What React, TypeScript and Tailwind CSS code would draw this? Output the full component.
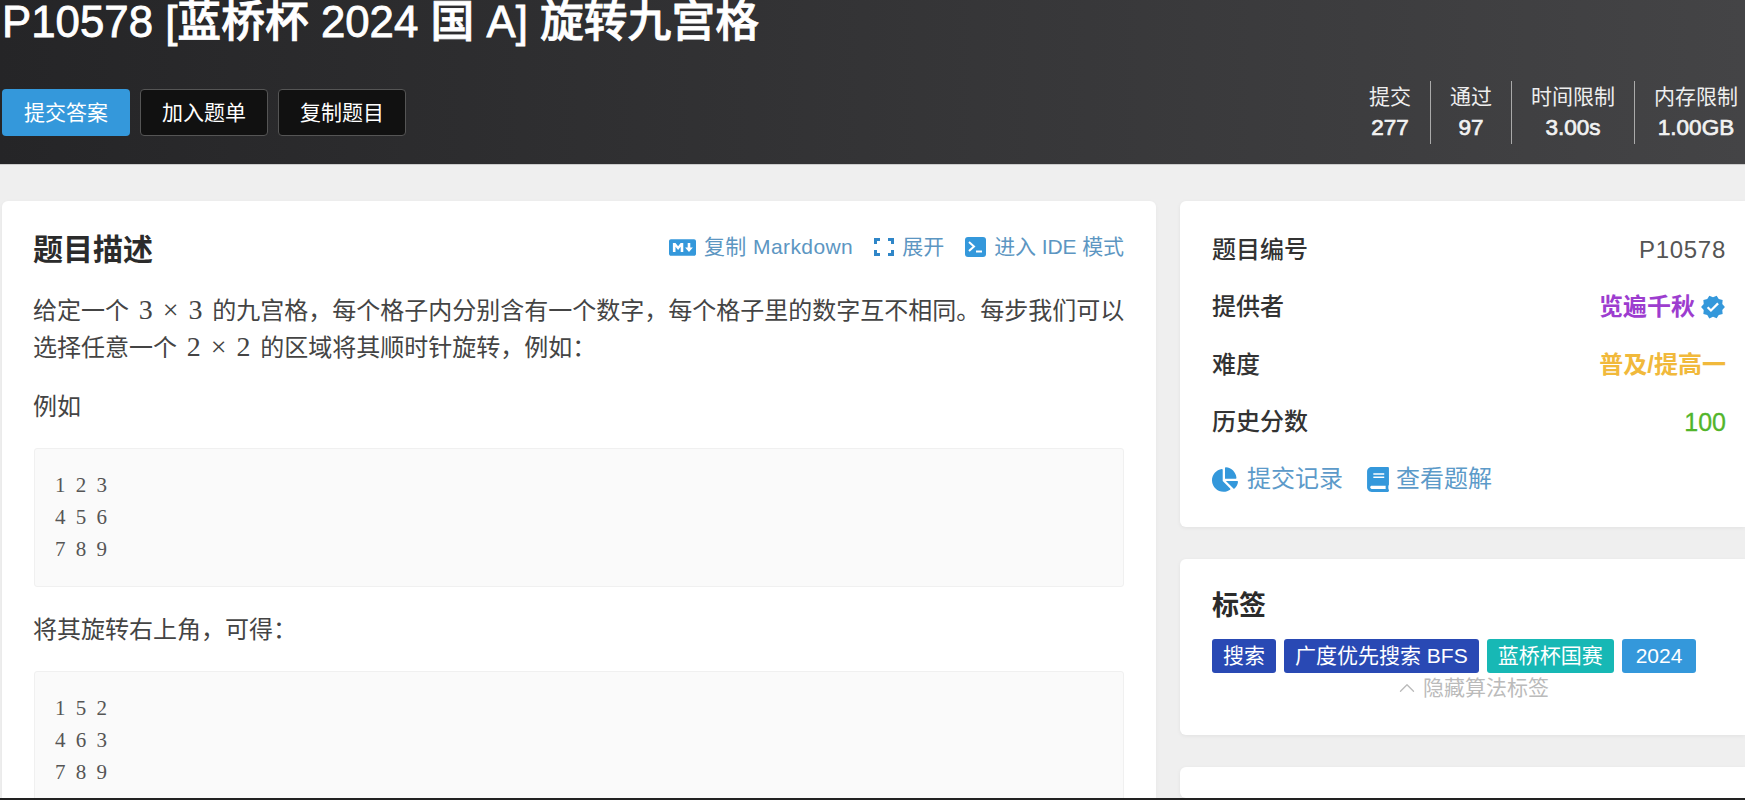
import React from "react";
import { FaMarkdown, FaChartPie, FaBook } from "react-icons/fa";
import { MdVerified } from "react-icons/md";
import { LuChevronUp } from "react-icons/lu";

function Expand() {
  return (
    <svg viewBox="0 0 22 20" className="h-[20px] w-[22px]" fill="none" stroke="#2f86c8" strokeWidth="3">
      <path d="M7 2.500H2.500V7M2.500 13v4.500H7M15 2.500h4.500V7M19.500 13v4.500H15" />
    </svg>
  );
}

function Term() {
  return (
    <svg viewBox="0 0 21 20" className="h-[20px] w-[21px]">
      <rect x="0" y="0" width="21" height="20" rx="3" fill="#3498db" />
      <path d="M4 5l5 4.500-5 4.500" fill="none" stroke="#fff" strokeWidth="2" />
      <path d="M11 14.500h6" fill="none" stroke="#fff" strokeWidth="2" />
    </svg>
  );
}

function Code({ rows }: { rows: string[] }) {
  return (
    <div className="mx-[32px] h-[139px] shrink-0 rounded-[3px] border border-[#f0f0f0] bg-[#fafafa] pl-[20px] pt-[21px] font-['Liberation_Serif',serif] text-[21px] leading-[31.800px] text-[#555] [word-spacing:5px]">
      {rows.map((r) => (
        <div key={r}>{r}</div>
      ))}
    </div>
  );
}

function Stat({ label, value, last }: { label: string; value: string; last?: boolean }) {
  return (
    <div className={`flex h-[63px] flex-col items-center px-[19px] ${last ? "" : "border-r border-[#aaa]"}`}>
      <div className="mt-[3px] text-[21px] leading-[26px] text-[#eee]">{label}</div>
      <div className="mt-[5px] text-[22.500px] leading-[26px] text-[#f2f2f2] [-webkit-text-stroke:0.7px_#f2f2f2]">{value}</div>
    </div>
  );
}

function Row({ label, children }: { label: string; children: React.ReactNode }) {
  return (
    <div className="flex h-[57.500px] items-center justify-between">
      <span className="text-[24px] font-medium text-[#333]">{label}</span>
      {children}
    </div>
  );
}

function Tag({ c, t }: { c: string; t: string }) {
  return (
    <span className={`flex h-[34px] items-center rounded-[3px] text-[21px] text-white ${c}`}>{t}</span>
  );
}

const M = "font-['Liberation_Serif',serif] text-[28px] [word-spacing:3px] mx-[3px]";

export default function App() {
  return (
    <div className="flex h-[800px] w-[1745px] flex-col overflow-hidden border-b-2 border-[#222] bg-[#efefef] font-['Liberation_Sans','Noto_Sans_CJK_SC',sans-serif]">
      <header className="flex h-[165px] shrink-0 flex-col border-b border-[#ccc] bg-gradient-to-r from-[#252527] to-[#444446] text-white">
        <h1 className="h-[44px] whitespace-nowrap pl-[2px] text-[43.800px] font-medium leading-[44px] [-webkit-text-stroke:0.8px_white]">
          P10578 [蓝桥杯 2024 国 A] 旋转九宫格
        </h1>
        <div className="mt-auto flex items-end justify-between pb-[20px] pl-[2px] pr-0">
          <div className="flex gap-[10px] pb-[8px] text-[21px] leading-none">
            <button className="h-[47px] w-[128px] rounded-[4px] bg-[#3498db] text-white">提交答案</button>
            <button className="h-[47px] w-[128px] rounded-[4px] border border-[#555] bg-[#111] text-white">加入题单</button>
            <button className="h-[47px] w-[128px] rounded-[4px] border border-[#555] bg-[#111] text-white">复制题目</button>
          </div>
          <div className="flex">
            <Stat label="提交" value="277" />
            <Stat label="通过" value="97" />
            <Stat label="时间限制" value="3.00s" />
            <div className="-mr-[12px]">
              <Stat label="内存限制" value="1.00GB" last />
            </div>
          </div>
        </div>
      </header>

      <main className="flex min-h-0 flex-1 gap-[24px] pl-[2px] pt-[36px]">
        <section className="flex w-[1154px] shrink-0 flex-col rounded-t-[6px] bg-white text-[24px] text-[#444] shadow-[0_1px_4px_rgba(0,0,0,0.04)]">
          <div className="flex items-center justify-between pb-[22px] pl-[31px] pr-[32px] pt-[29px]">
            <h2 className="text-[30px] font-semibold leading-[40px] text-[#2b2b2b]">题目描述</h2>
            <div className="-mt-[6px] flex items-center text-[21px] text-[#5c96c2]">
              <FaMarkdown className="mr-[8px] h-[27px] w-[27px] text-[#3498db]" />
              <span className="tracking-[0.02em]">复制 Markdown</span>
              <span className="ml-[20px] mr-[7px]"><Expand /></span>
              <span>展开</span>
              <span className="ml-[21px] mr-[8px]"><Term /></span>
              <span className="tracking-[-0.1px]">进入 IDE 模式</span>
            </div>
          </div>
          <p className="whitespace-nowrap pl-[31px] pr-[32px] leading-[36px]">
            给定一个 <span className={M}>3 × 3</span> 的九宫格，每个格子内分别含有一个数字，每个格子里的数字互不相同。每步我们可以
            <br />
            选择任意一个 <span className={M}>2 × 2</span> 的区域将其顺时针旋转，例如：
          </p>
          <p className="mt-[23px] pl-[31px] leading-[36px]">例如</p>
          <div className="mt-[23px]">
            <Code rows={["1 2 3", "4 5 6", "7 8 9"]} />
          </div>
          <p className="mt-[25px] pl-[31px] leading-[36px]">将其旋转右上角，可得：</p>
          <div className="mt-[23px]">
            <Code rows={["1 5 2", "4 6 3", "7 8 9"]} />
          </div>
        </section>

        <aside className="flex min-w-0 flex-1 flex-col gap-[32px]">
          <section className="h-[326px] shrink-0 rounded-l-[6px] bg-white pl-[32px] pr-[19px] pt-[20px] shadow-[0_1px_4px_rgba(0,0,0,0.06)]">
            <Row label="题目编号"><span className="text-[24px] tracking-[0.03em] text-[#555]">P10578</span></Row>
            <Row label="提供者">
              <span className="flex items-center gap-[5px] text-[24px] font-semibold text-[#9d3dcf]">
                览遍千秋
                <MdVerified className="h-[26px] w-[26px] text-[#3498db]" />
              </span>
            </Row>
            <Row label="难度"><span className="text-[24px] font-semibold text-[#f1b93b]">普及/提高一</span></Row>
            <Row label="历史分数"><span className="text-[25px] font-medium text-[#52b52b] [-webkit-text-stroke:0.3px_#52b52b]">100</span></Row>
            <div className="flex h-[56px] items-center text-[24px] text-[#5c9ac9]">
              <FaChartPie className="mr-[9px] h-[25px] w-[26px] text-[#3498db]" />
              <span>提交记录</span>
              <FaBook className="ml-[24px] mr-[7px] h-[25px] w-[22px] text-[#3498db]" />
              <span>查看题解</span>
            </div>
          </section>
          <section className="h-[176px] shrink-0 rounded-l-[6px] bg-white pl-[32px] pr-[20px] pt-[27px] shadow-[0_1px_4px_rgba(0,0,0,0.06)]">
            <h2 className="text-[27px] font-semibold leading-[40px] text-[#2b2b2b]">标签</h2>
            <div className="mt-[13px] flex gap-[8px]">
              <Tag c="bg-[#2949b4] px-[11px]" t="搜索" />
              <Tag c="bg-[#2949b4] px-[11px]" t="广度优先搜索 BFS" />
              <Tag c="bg-[#17b8b5] px-[11px]" t="蓝桥杯国赛" />
              <Tag c="bg-[#3498db] px-[14px]" t="2024" />
            </div>
            <div className="flex h-[30px] items-center justify-center pl-[6px] text-[21px] text-[#bbb]">
              <LuChevronUp className="mr-[3px] h-[26px] w-[26px] text-[#bbb]" strokeWidth={1.25} />
              隐藏算法标签
            </div>
          </section>
          <section className="flex-1 rounded-l-[6px] bg-white shadow-[0_1px_4px_rgba(0,0,0,0.06)]" />
        </aside>
      </main>
    </div>
  );
}
